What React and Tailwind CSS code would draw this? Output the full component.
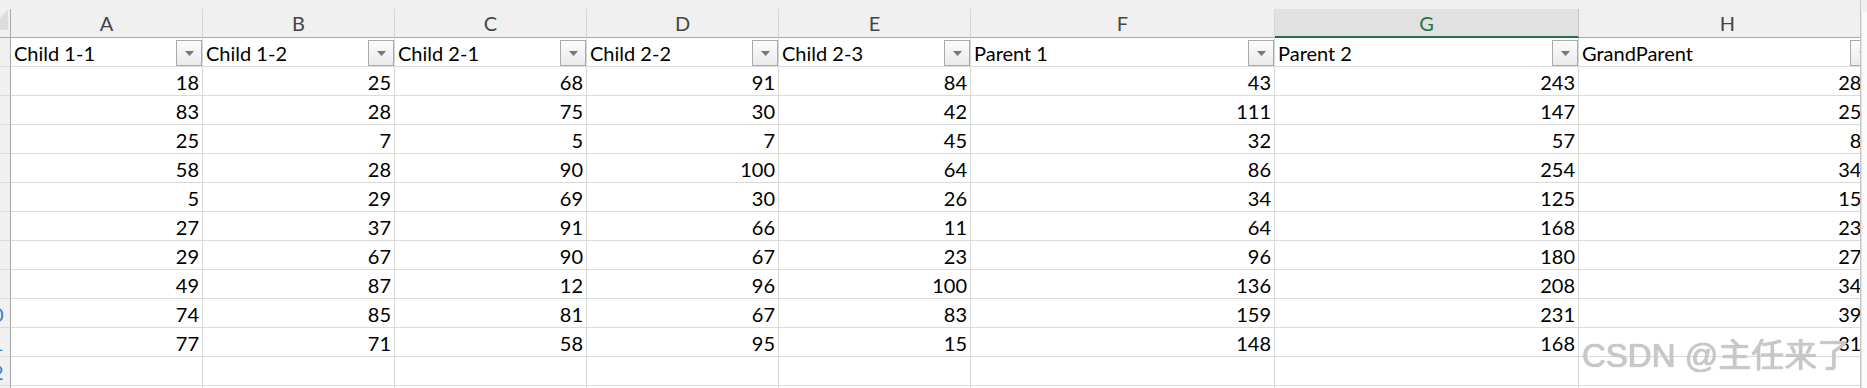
const columns = [
  { letter: "A", title: "Child 1-1", width: "w-[192px]" },
  { letter: "B", title: "Child 1-2", width: "w-[192px]" },
  { letter: "C", title: "Child 2-1", width: "w-[192px]" },
  { letter: "D", title: "Child 2-2", width: "w-[192px]" },
  { letter: "E", title: "Child 2-3", width: "w-[192px]" },
  { letter: "F", title: "Parent 1", width: "w-[304px]" },
  { letter: "G", title: "Parent 2", width: "w-[304px]", active: true },
  { letter: "H", title: "GrandParent", width: "w-[298px]" },
];

const rows = [
  [18, 25, 68, 91, 84, 43, 243, 286],
  [83, 28, 75, 30, 42, 111, 147, 258],
  [25, 7, 5, 7, 45, 32, 57, 89],
  [58, 28, 90, 100, 64, 86, 254, 340],
  [5, 29, 69, 30, 26, 34, 125, 159],
  [27, 37, 91, 66, 11, 64, 168, 232],
  [29, 67, 90, 67, 23, 96, 180, 276],
  [49, 87, 12, 96, 100, 136, 208, 344],
  [74, 85, 81, 67, 83, 159, 231, 390],
  [77, 71, 58, 95, 15, 148, 168, 316],
];

function FilterButton() {
  return (
    <div className="w-[26px] h-[26px] shrink-0 border border-[#aaaaaa] bg-linear-to-b from-[#fcfcfc] to-[#ebebeb] flex items-center justify-center">
      <svg width="9" height="5" viewBox="0 0 9 5">
        <polygon points="0,0 9,0 4.5,5" fill="#777777" />
      </svg>
    </div>
  );
}

function RowNumber({ n }) {
  return (
    <div className="w-[11px] h-[29px] shrink-0 bg-[#f0f0f0] border-r border-r-[#a9a9a9] border-b border-b-[#dadada] overflow-hidden flex justify-end items-end pb-[1px]">
      <span className="w-[36px] shrink-0 text-center text-[20px] leading-[24px] text-[#3a7fd6]">
        {n}
      </span>
    </div>
  );
}

export default function App() {
  return (
    <div className="w-[1867px] h-[388px] overflow-hidden bg-white relative font-['Lato',sans-serif] text-black">
      <div className="flex">
        <div className="w-[1861px] shrink-0 overflow-hidden border-r border-[#c6c6c6]">
          <div className="h-[9px] w-[1877px] bg-[#f0f0f0]" />

          {/* column letters */}
          <div className="flex w-[1877px] bg-[#f0f0f0]">
            <div className="w-[11px] h-[29px] shrink-0 border-r border-r-[#a9a9a9] border-b border-b-[#a9a9a9] flex items-end">
              <svg width="8" height="24" viewBox="0 0 8 24" className="mb-[3px]">
                <polygon points="0,8 8,0 8,20 0,20" fill="#dcdcdc" />
              </svg>
            </div>
            {columns.map((c) => (
              <div
                key={c.letter}
                className={`${c.width} h-[29px] shrink-0 border-r flex items-center justify-center text-[20px] leading-[28px] ${
                  c.active
                    ? "bg-[#e1e1e1] border-r-[#c4c4c4] border-b-2 border-b-[#217346] text-[#217346]"
                    : "border-r-[#d6d6d6] border-b border-b-[#a9a9a9] text-[#444444]"
                }`}
              >
                {c.letter}
              </div>
            ))}
          </div>

          {/* table header row */}
          <div className="flex w-[1877px]">
            <RowNumber n={1} />
            {columns.map((c) => (
              <div
                key={c.letter}
                className={`${c.width} h-[29px] shrink-0 border-r border-b border-[#dadada] flex items-end justify-between pl-[3px]`}
              >
                <span className="text-[20px] leading-[24px] pb-[1px]">{c.title}</span>
                <FilterButton />
              </div>
            ))}
          </div>

          {rows.map((r, i) => (
            <div key={i} className="flex w-[1877px]">
              <RowNumber n={i + 2} />
              {r.map((v, j) => (
                <div
                  key={j}
                  className={`${columns[j].width} h-[29px] shrink-0 border-r border-b border-[#dadada] flex items-end justify-end pr-[3px] pb-[1px] text-[20px] leading-[24px]`}
                >
                  {v}
                </div>
              ))}
            </div>
          ))}

          {[12, 13].map((n) => (
            <div key={n} className="flex w-[1877px]">
              <RowNumber n={n} />
              {columns.map((c) => (
                <div key={c.letter} className={`${c.width} h-[29px] shrink-0 border-r border-b border-[#dadada]`} />
              ))}
            </div>
          ))}
        </div>

        <div className="flex-1 flex flex-col h-[388px]">
          <div className="h-[12px] bg-[#f0f0f0]" />
          <div className="flex-1 bg-[#fafafa] border-l border-[#e2e2e2]" />
        </div>
      </div>

      {/* watermark */}
      <div className="absolute left-[1582px] top-[339px] text-[33px] leading-none whitespace-nowrap text-[#c8c8c8] [text-shadow:0_0_1px_#9a9a9a] font-['Liberation_Sans','Noto_Sans_CJK_SC',sans-serif]">
        CSDN @主任来了
      </div>
    </div>
  );
}
